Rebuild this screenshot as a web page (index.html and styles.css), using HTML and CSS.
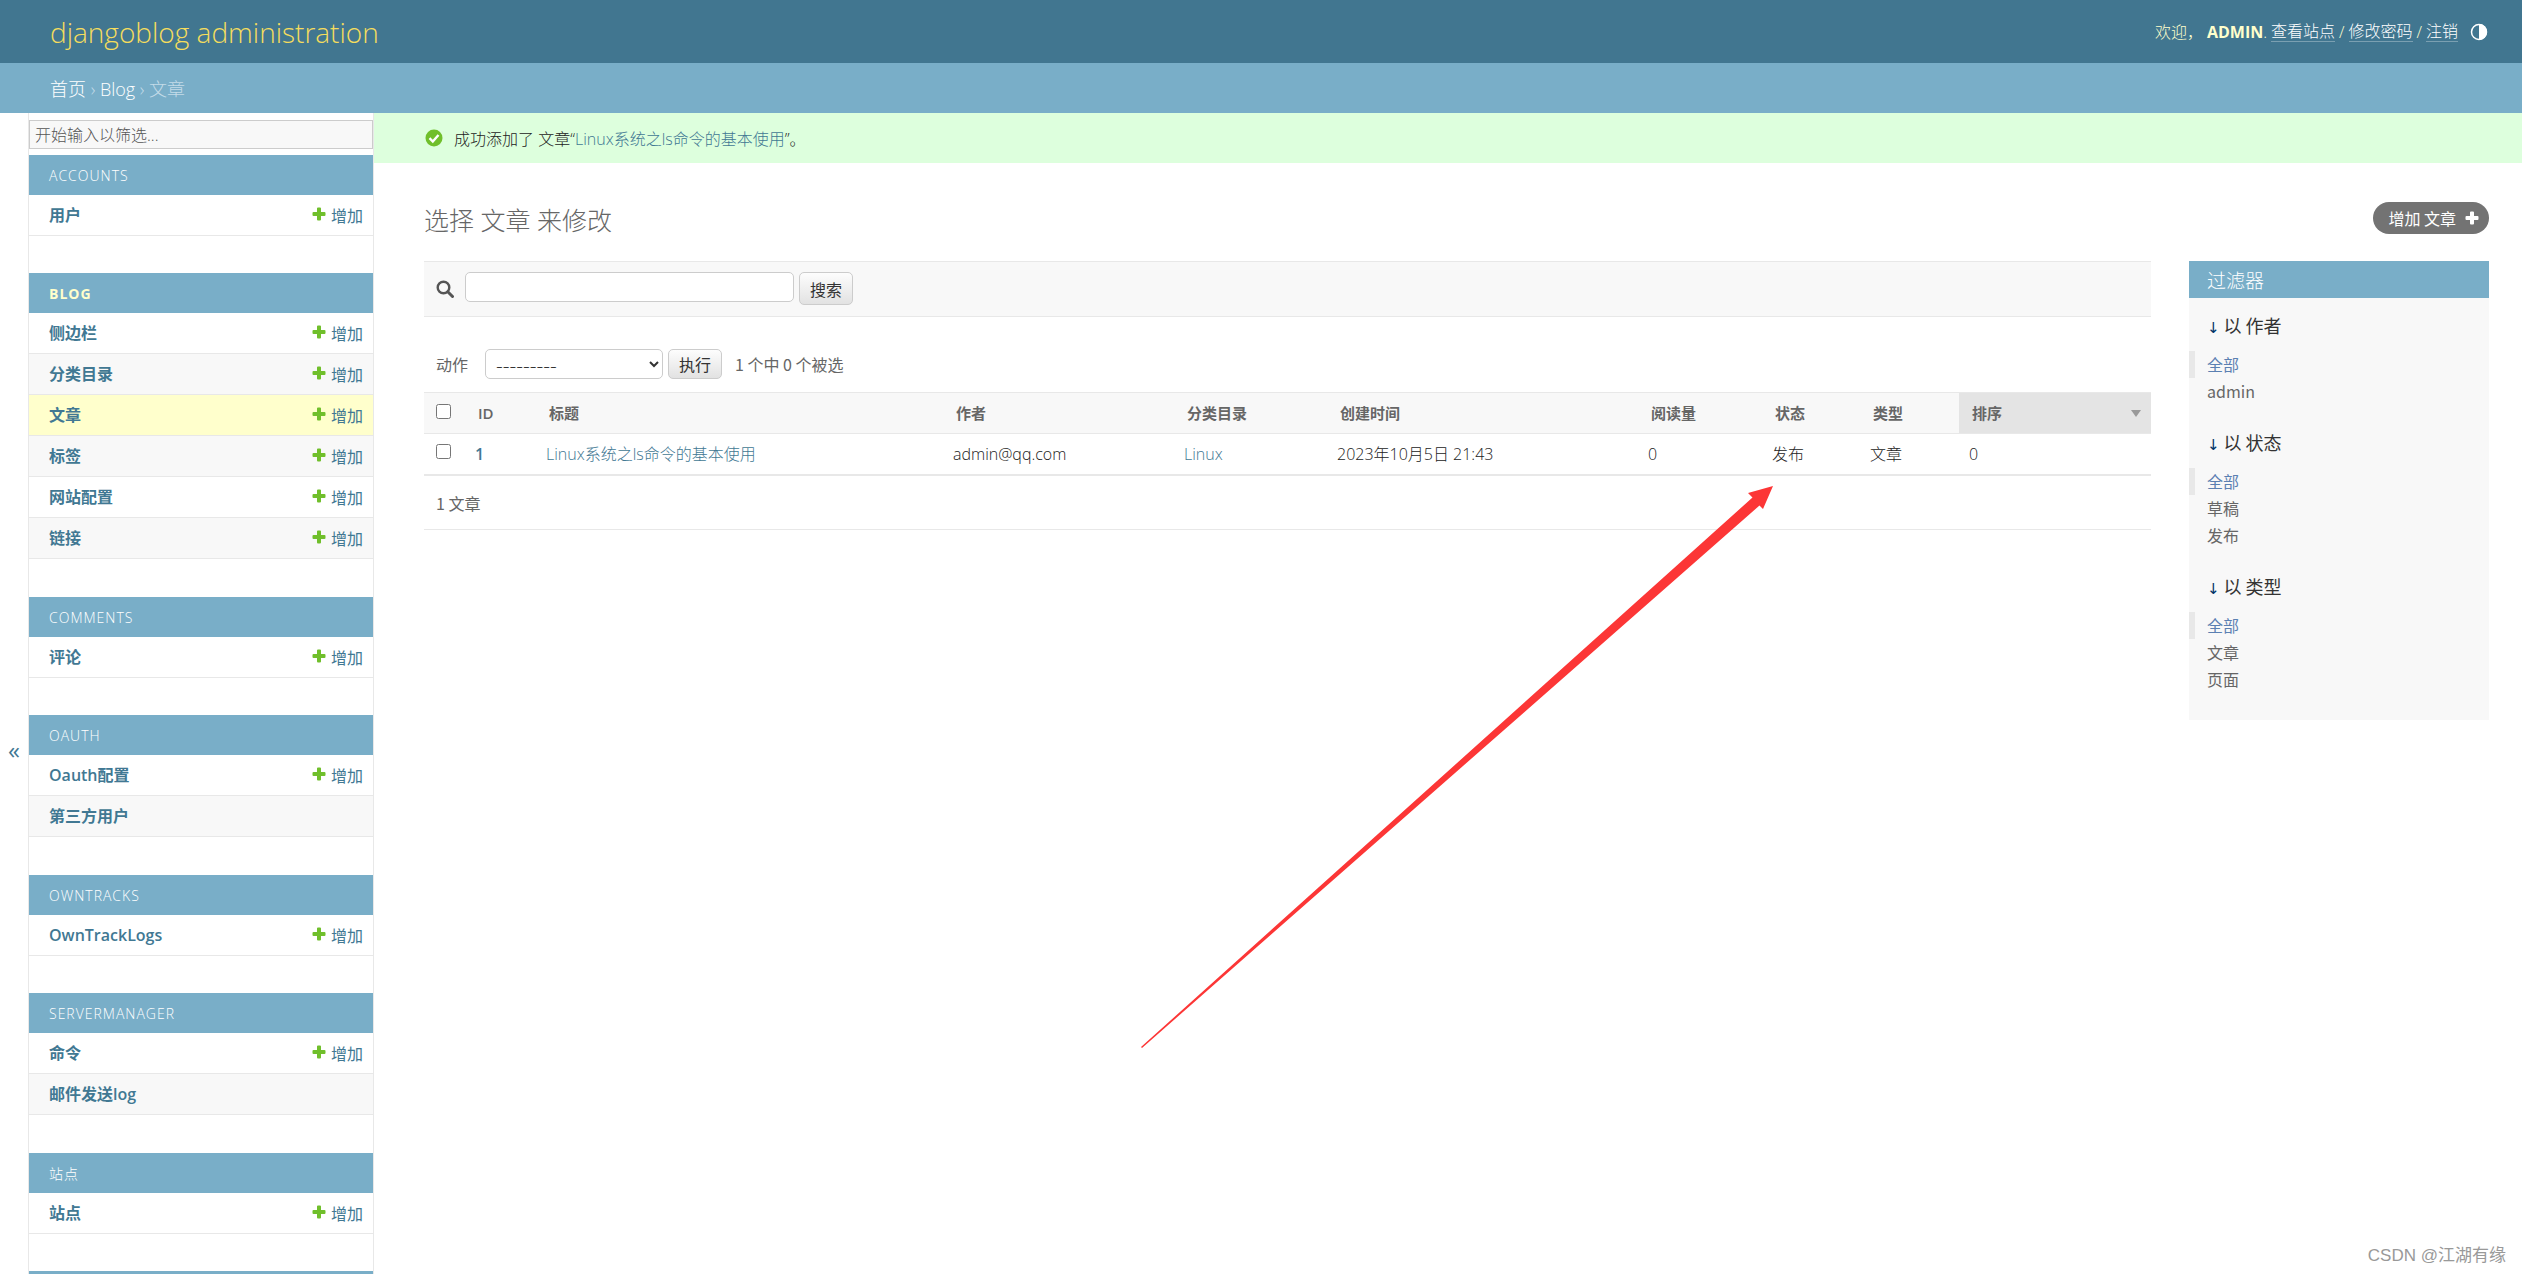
FILE: index.html
```html
<!DOCTYPE html>
<html lang="zh-hans">
<head>
<meta charset="utf-8">
<meta name="viewport" content="width=device-width, initial-scale=1">
<title>选择 文章 来修改 | djangoblog administration</title>
<link rel="stylesheet" href="styles.css">
</head>
<body>
<svg class="sprite" aria-hidden="true">
  <symbol id="plus" viewBox="0 0 14 14"><path d="M5 1.5Q5 .5 6 .5H8Q9 .5 9 1.5V5H12.5Q13.500 5 13.500 6V8Q13.500 9 12.500 9H9V12.500Q9 13.500 8 13.500H6Q5 13.500 5 12.500V9H1.500Q.5 9 .5 8V6Q.5 5 1.500 5H5Z" fill="currentColor"/></symbol>
</svg>

<header class="header">
  <h1 class="site-name"><a href="#">djangoblog administration</a></h1>
  <div class="user-tools">
    <span>欢迎， </span><strong>ADMIN</strong><span class="dot">.</span>
    <a href="#">查看站点</a><span class="slash">/</span><a href="#">修改密码</a><span class="slash">/</span><a href="#">注销</a>
    <button class="theme-toggle" type="button" aria-label="切换主题">
      <svg viewBox="0 0 18 18"><circle cx="9" cy="9" r="7.500" fill="none" stroke="#fff" stroke-width="1.500"/><path d="M9 1A8 8 0 0 1 9 17Z" fill="#fff"/></svg>
    </button>
  </div>
</header>

<nav class="breadcrumbs" aria-label="面包屑"><a href="#">首页</a> › <a href="#">Blog</a> › <span>文章</span></nav>

<div class="main">
  <button class="nav-toggle" type="button" aria-label="切换导航">«</button>

  <nav class="sidebar" aria-label="侧边栏">
    <input class="nav-filter" type="search" placeholder="开始输入以筛选..." aria-label="筛选导航项">

    <table class="app">
      <caption><a href="#">ACCOUNTS</a></caption>
      <tr><th scope="row"><a href="#">用户</a></th><td><a class="add" href="#"><svg><use href="#plus"/></svg>增加</a></td></tr>
    </table>
    <table class="app app-long current-app">
      <caption><a href="#">BLOG</a></caption>
      <tr><th scope="row"><a href="#">侧边栏</a></th><td><a class="add" href="#"><svg><use href="#plus"/></svg>增加</a></td></tr>
      <tr><th scope="row"><a href="#">分类目录</a></th><td><a class="add" href="#"><svg><use href="#plus"/></svg>增加</a></td></tr>
      <tr class="current"><th scope="row"><a href="#">文章</a></th><td><a class="add" href="#"><svg><use href="#plus"/></svg>增加</a></td></tr>
      <tr><th scope="row"><a href="#">标签</a></th><td><a class="add" href="#"><svg><use href="#plus"/></svg>增加</a></td></tr>
      <tr><th scope="row"><a href="#">网站配置</a></th><td><a class="add" href="#"><svg><use href="#plus"/></svg>增加</a></td></tr>
      <tr><th scope="row"><a href="#">链接</a></th><td><a class="add" href="#"><svg><use href="#plus"/></svg>增加</a></td></tr>
    </table>
    <table class="app">
      <caption><a href="#">COMMENTS</a></caption>
      <tr><th scope="row"><a href="#">评论</a></th><td><a class="add" href="#"><svg><use href="#plus"/></svg>增加</a></td></tr>
    </table>
    <table class="app app-long">
      <caption><a href="#">OAUTH</a></caption>
      <tr><th scope="row"><a href="#">Oauth配置</a></th><td><a class="add" href="#"><svg><use href="#plus"/></svg>增加</a></td></tr>
      <tr><th scope="row"><a href="#">第三方用户</a></th><td></td></tr>
    </table>
    <table class="app">
      <caption><a href="#">OWNTRACKS</a></caption>
      <tr><th scope="row"><a href="#">OwnTrackLogs</a></th><td><a class="add" href="#"><svg><use href="#plus"/></svg>增加</a></td></tr>
    </table>
    <table class="app app-long">
      <caption><a href="#">SERVERMANAGER</a></caption>
      <tr><th scope="row"><a href="#">命令</a></th><td><a class="add" href="#"><svg><use href="#plus"/></svg>增加</a></td></tr>
      <tr><th scope="row"><a href="#">邮件发送log</a></th><td></td></tr>
    </table>
    <table class="app">
      <caption><a href="#">站点</a></caption>
      <tr><th scope="row"><a href="#">站点</a></th><td><a class="add" href="#"><svg><use href="#plus"/></svg>增加</a></td></tr>
    </table>
    <table class="app">
      <caption></caption>
    </table>
  </nav>

  <div class="content-wrap">
    <div class="message" role="status">
      <svg viewBox="0 0 18 18"><circle cx="9" cy="9" r="8.500" fill="#70bf2b"/><path d="M4.500 9.200L7.800 12.500L13.500 6" fill="none" stroke="#fff" stroke-width="2.400"/></svg>
      <span>成功添加了 文章“<a href="#">Linux系统之ls命令的基本使用</a>”。</span>
    </div>

    <main class="content">
      <div class="title-row">
        <h2 class="title">选择 文章 来修改</h2>
        <a class="add-button" href="#">增加 文章<svg><use href="#plus"/></svg></a>
      </div>

      <div class="changelist">
        <div class="results-pane">
          <form class="toolbar">
            <label for="searchbar" aria-label="搜索"><svg viewBox="0 0 18 18"><circle cx="7.500" cy="7.500" r="5.800" fill="none" stroke="#555" stroke-width="2.400"/><path d="M11.800 11.800L16.500 16.500" stroke="#555" stroke-width="3" stroke-linecap="round"/></svg></label>
            <input id="searchbar" class="field search-field" type="text">
            <button class="button search-button" type="button">搜索</button>
          </form>

          <div class="actions">
            <label for="action">动作</label>
            <select id="action" class="field"><option>---------</option></select>
            <button class="button" type="button">执行</button>
            <span class="counter">1 个中 0 个被选</span>
          </div>

          <table class="results">
            <colgroup><col class="c-check"><col class="c-id"><col class="c-title"><col class="c-author"><col class="c-category"><col class="c-created"><col class="c-views"><col class="c-status"><col class="c-type"><col class="c-order"></colgroup>
            <thead>
              <tr>
                <th class="check"><input type="checkbox" aria-label="全选"></th>
                <th>ID</th><th>标题</th><th>作者</th><th>分类目录</th><th>创建时间</th><th>阅读量</th><th>状态</th><th>类型</th>
                <th class="sorted"><span>排序<svg viewBox="0 0 10 7"><path d="M0 0H10L5 7Z" fill="#999"/></svg></span></th>
              </tr>
            </thead>
            <tbody>
              <tr>
                <td class="check"><input type="checkbox" aria-label="选择文章 1"></td>
                <td><a class="id" href="#">1</a></td><td><a href="#">Linux系统之ls命令的基本使用</a></td><td>admin@qq.com</td><td><a href="#">Linux</a></td><td>2023年10月5日 21:43</td><td>0</td><td>发布</td><td>文章</td><td>0</td>
              </tr>
            </tbody>
          </table>
          <p class="paginator">1 文章</p>
        </div>

        <aside class="filters">
          <h2>过滤器</h2>
          <section>
            <h3>以 作者</h3>
            <ul><li class="selected"><a href="#">全部</a></li><li><a href="#">admin</a></li></ul>
          </section>
          <section>
            <h3>以 状态</h3>
            <ul><li class="selected"><a href="#">全部</a></li><li><a href="#">草稿</a></li><li><a href="#">发布</a></li></ul>
          </section>
          <section>
            <h3>以 类型</h3>
            <ul><li class="selected"><a href="#">全部</a></li><li><a href="#">文章</a></li><li><a href="#">页面</a></li></ul>
          </section>
        </aside>
      </div>
    </main>
  </div>
</div>

<svg class="arrow" viewBox="0 0 632 562" aria-hidden="true"><path d="M0 561L611.500 11.500L607 7L632 0L622 23L618.500 19.500L1 562Z" fill="#fc3636"/></svg>
<div class="watermark">CSDN @江湖有缘</div>
</body>
</html>
```
FILE: styles.css
```css
:root {
  --primary: #79aec8;
  --secondary: #417690;
  --accent: #f5dd5d;
  --cream: #ffffcc;
  --link: #417893;
  --text: #333;
  --quiet: #666;
  --line: #e8e8e8;
  --tint: #f8f8f8;
  --latin-first: "Open Sans", "Noto Sans CJK SC", sans-serif;
}

* { box-sizing: border-box; }

body {
  margin: 0;
  height: 100vh;
  overflow: hidden;
  background: #fff;
  color: var(--text);
  font: 400 16px/20px "Noto Sans CJK SC", sans-serif;
}

a { color: var(--link); text-decoration: none; }
h1, h2, h3, p, ul { margin: 0; padding: 0; }
h1, h2 { font-weight: 300; }
ul { list-style: none; }
button, input, select { font: inherit; color: inherit; margin: 0; }
svg { flex: none; }
.sprite { display: none; }

/* Header */
.header {
  display: flex;
  align-items: center;
  justify-content: space-between;
  height: 63px;
  padding: 0 34px 0 50px;
  background: var(--secondary);
  color: var(--cream);
}
.site-name { font-family: var(--latin-first); font-size: 28px; line-height: 36px; }
.site-name a { color: var(--accent); }
.user-tools {
  display: flex;
  align-items: center;
  font-family: var(--latin-first);
  font-weight: 300;
}
.user-tools strong { margin-left: 4px; font-weight: 700; }
.user-tools a { color: #fff; line-height: 19px; border-bottom: 1px solid #7a9fb1; }
.dot { margin-right: 4px; }
.slash { padding: 0 4px; }
.theme-toggle {
  display: flex;
  margin-left: 12px;
  padding: 0;
  border: 0;
  background: none;
}
.theme-toggle svg { width: 18px; height: 18px; }

.breadcrumbs {
  height: 50px;
  padding: 0 50px;
  background: var(--primary);
  color: #c4dce8;
  font-family: var(--latin-first);
  font-size: 18px;
  font-weight: 300;
  line-height: 52px;
}
.breadcrumbs a { color: #fff; }

/* Sidebar */
.main { display: flex; }
.nav-toggle {
  flex: none;
  width: 28px;
  height: 100vh;
  padding: 0;
  border: 0;
  background: #fff;
  color: var(--link);
  font-family: var(--latin-first);
  font-size: 24px;
}
.sidebar {
  flex: none;
  width: 346px;
  height: 100vh;
  padding-top: 7px;
  overflow: hidden;
  border: solid var(--line);
  border-width: 0 1px;
}
.nav-filter {
  display: block;
  width: 100%;
  height: 29px;
  margin-bottom: 6px;
  padding: 1px 5px;
  border: 1px solid #ccc;
  border-radius: 0;
  background: var(--tint);
  font-family: var(--latin-first);
  font-weight: 300;
  outline: 0;
}
.nav-filter::placeholder { color: #555; }
.app {
  width: 100%;
  margin-bottom: 37px;
  border-spacing: 0;
}
.app-long { margin-bottom: 38px; }
.app caption {
  height: 40px;
  padding: 0 20px;
  background: var(--primary);
  font-family: var(--latin-first);
  font-size: 14px;
  font-weight: 300;
  line-height: 41px;
  text-align: left;
  letter-spacing: 1px;
}
.app caption a { color: #fff; }
.current-app caption a { color: var(--cream); font-weight: 700; }
.app tr:nth-child(even) { background: var(--tint); }
.app .current { background: var(--cream); }
.app th, .app td {
  height: 41px;
  padding: 0 10px 0 20px;
  border-bottom: 1px solid var(--line);
  text-align: left;
}
.app th { font-family: var(--latin-first); font-weight: 600; }
.add { display: flex; align-items: center; justify-content: flex-end; gap: 5px; }
.add svg { width: 14px; height: 14px; margin-bottom: 3px; color: #70bf2b; }

/* Content */
.content-wrap { flex: 1; min-width: 0; }
.message {
  display: flex;
  align-items: center;
  gap: 11px;
  height: 50px;
  padding: 0 51px;
  background: #ddffdd;
  color: #222;
  font-family: var(--latin-first);
  font-weight: 300;
}
.message svg { width: 18px; height: 18px; }
.message span { padding-top: 2px; }
.content { padding: 39px 33px 0 50px; }
.title-row {
  display: flex;
  justify-content: space-between;
  height: 59px;
}
.title { color: var(--quiet); font-family: var(--latin-first); font-size: 25px; line-height: 36px; }
.add-button {
  display: flex;
  align-items: center;
  gap: 9px;
  height: 32px;
  padding: 0 10px 0 15px;
  border-radius: 16px;
  background: #737373;
  color: #fff;
}
.add-button svg { width: 14px; height: 14px; }

.changelist { display: flex; align-items: flex-start; gap: 38px; }
.results-pane { flex: 1; min-width: 0; }
.toolbar {
  display: flex;
  height: 56px;
  padding: 10px 12px;
  border: solid var(--line);
  border-width: 1px 0;
  background: var(--tint);
}
.toolbar label { margin: 8px 11px 0 0; }
.toolbar svg { display: block; width: 18px; height: 18px; }
.field {
  height: 30px;
  border: 1px solid #ccc;
  border-radius: 5px;
  background: #fff;
}
.search-field { width: 329px; padding: 0 8px; }
.button {
  width: 54px;
  height: 30px;
  margin-left: 5px;
  padding: 0;
  border: 1px solid #ccc;
  border-radius: 5px;
  background: linear-gradient(#fdfdfd, #e2e2e2);
}
.search-button { height: 33px; }

.actions {
  display: flex;
  align-items: center;
  height: 75px;
  padding: 19px 12px 0;
  color: var(--quiet);
}
.actions label { margin-right: 17px; }
.actions select {
  width: 178px;
  padding: 0 6px;
  color: var(--text);
  font-family: "Open Sans", sans-serif;
  font-size: 21px;
  font-weight: 300;
}
.actions .button { color: var(--text); }
.counter { margin-left: 13px; }

.results {
  width: 100%;
  table-layout: fixed;
  border-collapse: collapse;
  font-family: var(--latin-first);
}
.c-check { width: 41px; }
.c-id { width: 71px; }
.c-title { width: 407px; }
.c-author { width: 231px; }
.c-category { width: 153px; }
.c-created { width: 311px; }
.c-views { width: 124px; }
.c-status { width: 98px; }
.c-type { width: 99px; }
.c-order { width: 192px; }
.results th, .results td {
  height: 41px;
  padding: 0 10px;
  text-align: left;
}
.results td { color: #222; font-weight: 300; }
.results thead tr { border: solid var(--line); border-width: 1px 0; background: var(--tint); }
.results tbody tr { border-bottom: 2px solid var(--line); }
.results th { padding-left: 13px; color: var(--quiet); font-size: 15px; font-weight: 600; }
.results .sorted { background: #e4e4e4; }
.sorted span { display: flex; align-items: center; justify-content: space-between; }
.sorted svg { width: 10px; height: 7px; }
.results .check { padding: 0 12px 4px; }
.check input { display: block; width: 15px; height: 15px; }
.results .id { font-weight: 600; }
.paginator {
  height: 54px;
  padding: 17px 12px;
  border-bottom: 1px solid var(--line);
  color: var(--quiet);
}

/* Filters */
.filters {
  flex: none;
  width: 300px;
  padding-bottom: 17px;
  background: var(--tint);
}
.filters h2 {
  height: 37px;
  padding: 0 18px;
  background: var(--primary);
  color: #fff;
  font-size: 19px;
  line-height: 37px;
}
.filters section { padding-bottom: 10px; }
.filters h3 { height: 53px; padding: 17px 18px 0; font-size: 18px; font-weight: 400; }
.filters h3::before { content: "↓ "; color: #036; font-family: "Noto Sans", "DejaVu Sans", sans-serif; font-size: 15px; }
.filters li { height: 27px; padding-left: 18px; line-height: 27px; }
.filters li a { color: var(--quiet); }
.filters .selected { padding-left: 12px; border-left: 6px solid var(--line); }
.filters .selected a { color: #5b80b2; }

/* Marks over the page */
.arrow { position: absolute; left: 1141px; top: 486px; width: 632px; height: 562px; pointer-events: none; }
.watermark {
  position: absolute;
  right: 16px;
  bottom: 6px;
  color: #999;
  font: 400 17px/24px "Liberation Sans", "Noto Sans CJK SC", sans-serif;
}
```
